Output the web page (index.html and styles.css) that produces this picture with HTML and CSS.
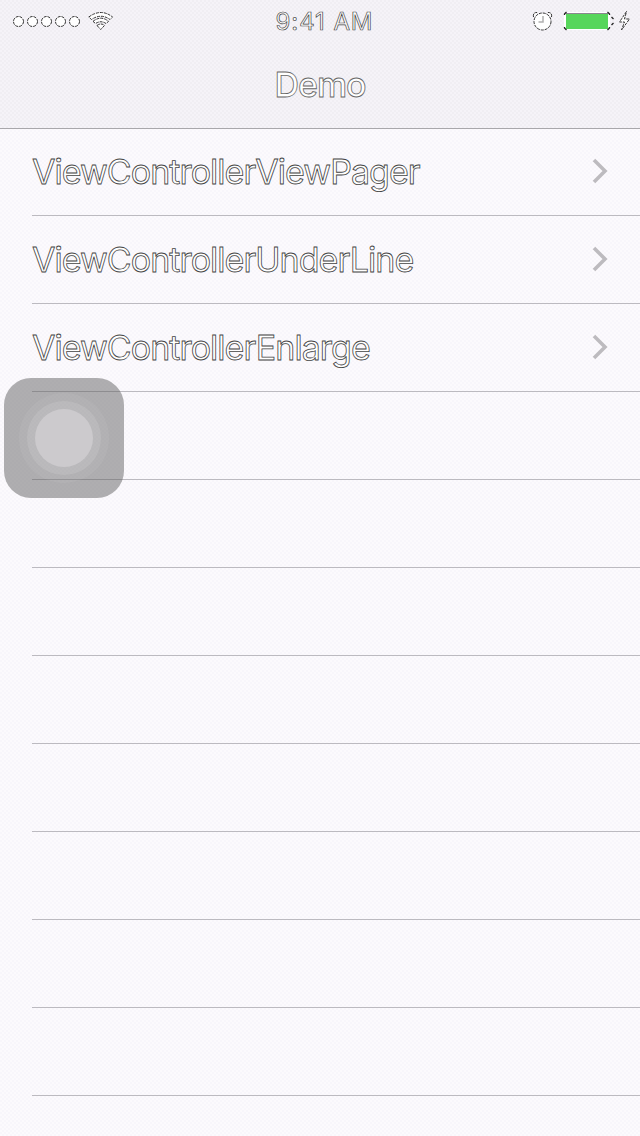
FILE: index.html
```
<!DOCTYPE html>
<html lang="en">
<head>
<meta charset="utf-8">
<title>Demo</title>
<link rel="stylesheet" href="styles.css">
</head>
<body>
<header class="header">
  <div class="status">
    <div class="signal">
      <svg class="dots" width="70" height="14" viewBox="0 0 70 14"><g class="outline dashed"><circle cx="6.5" cy="7.500" r="5"/><circle cx="20.5" cy="7.500" r="5"/><circle cx="34.5" cy="7.500" r="5"/><circle cx="48.5" cy="7.500" r="5"/><circle cx="62.5" cy="7.500" r="5"/></g></svg>
      <svg class="wifi" width="26" height="20" viewBox="0 0 26 20"><g class="outline dashed"><path d="M.8 6Q13-3 24.500 6L22 8.500Q13 2 3.500 8.500Z"/><path d="M5 10.400Q13 4 20.500 10.400L18 12.500Q13 9 7.500 12.500Z"/><path d="M9 14.500Q13 11.500 16.500 14.500L12.700 18.500Z"/></g></svg>
    </div>
    <div class="time"><span>9:41 AM</span></div>
    <div class="power">
      <svg width="108" height="24" viewBox="0 0 108 24">
        <g class="outline dashed"><circle cx="12.500" cy="12.500" r="8.500"/><path d="M3.500 8Q2.500 3 8 3.500M21.500 8Q22.500 3 17 3.500"/></g>
        <path class="hands" d="M13 7v6H8.500"/>
        <rect class="case" x="34.500" y="3.500" width="45" height="17" rx="2.500"/>
        <rect class="charge" x="36" y="5" width="42" height="15"/>
        <path class="top" d="M36 4.500h42"/>
        <path class="corners" d="M34.500 6V5l2-2M77.500 3l2 2v1M34.500 18v1l2 2M77.500 21l2-2v-1M81.500 8l2 2M81.500 16l2-2"/>
        <path class="outline dashed" d="M96.500 2.500L89.500 13h5l-3 8L99.500 10h-5Z"/>
      </svg>
    </div>
  </div>
  <h1 class="title"><span>Demo</span></h1>
</header>
<main class="list">
  <div class="row"><span class="label">ViewControllerViewPager</span><svg class="chevron" width="18" height="28" viewBox="0 0 18 28"><path d="M3 3l11 11L3 25"/></svg></div>
  <div class="row"><span class="label">ViewControllerUnderLine</span><svg class="chevron" width="18" height="28" viewBox="0 0 18 28"><path d="M3 3l11 11L3 25"/></svg></div>
  <div class="row"><span class="label">ViewControllerEnlarge</span><svg class="chevron" width="18" height="28" viewBox="0 0 18 28"><path d="M3 3l11 11L3 25"/></svg></div>
  <div class="row"></div><div class="row"></div><div class="row"></div><div class="row"></div>
  <div class="row"></div><div class="row"></div><div class="row"></div><div class="row"></div>
</main>
<div class="assist"><div class="ring outer"><div class="ring middle"><div class="ring inner"></div></div></div></div>
</body>
</html>
```
FILE: styles.css
```
* { box-sizing: border-box; }
body { margin: 0; width: 640px; height: 1136px; overflow: hidden; position: relative; font-family: Inter, "Liberation Sans", sans-serif; color: #fff; background: repeating-conic-gradient(#fcfafd 0 25%, #f8f6fb 0 50%) 0 0 / 4px 4px; }
svg { display: block; flex: none; }
.header { height: 129px; border-bottom: 1px solid #a8a7ab; background: repeating-conic-gradient(#f5f3f8 0 25%, #f0eef3 0 50%) 0 0 / 4px 4px; }
.status { height: 40px; display: grid; grid-template-columns: 1fr 1fr 1fr; align-items: center; }
.signal { display: flex; align-items: center; padding-left: 12px; gap: 6px; }
.time { text-align: center; font-size: 24px; line-height: 40px; padding: 2px 0 0 9px; letter-spacing: .9px; white-space: nowrap; -webkit-text-stroke: .7px #444; }
.power { display: flex; justify-content: flex-end; padding-right: 2px; }
.outline { fill: #fff; stroke: #333; stroke-width: 1; }
.dashed { stroke-dasharray: 3 1; }
.hands { fill: none; stroke: #b0b0b0; stroke-width: 1.5; }
.case { fill: #fff; stroke: #fff; }
.charge { fill: #57d65b; }
.top { stroke: #8b8790; }
.corners { fill: none; stroke: #222; stroke-width: 1.3; }
.title { margin: 0; height: 88px; line-height: 90px; text-align: center; font-size: 34px; font-weight: 500; letter-spacing: -1px; -webkit-text-stroke: .8px #666; }
.list { display: flex; flex-direction: column; }
.row { height: 88px; flex: none; margin-left: 32px; padding-right: 31px; border-bottom: 1px solid #bcbac0; display: flex; align-items: center; justify-content: space-between; }
.row:first-child { height: 87px; }
.label { font-size: 34px; line-height: 44px; letter-spacing: -.97px; white-space: nowrap; -webkit-text-stroke: .8px #444; }
.chevron { margin-bottom: 2px; fill: none; stroke: #bdbbbf; stroke-width: 3.600; }
.assist { position: absolute; left: 4px; top: 378px; width: 120px; height: 120px; border-radius: 27px; background: rgba(92, 91, 93, .48); display: grid; place-items: center; }
.ring { border-radius: 50%; display: grid; place-items: center; }
.outer { width: 90px; height: 90px; background: rgba(255, 255, 255, .06); }
.middle { width: 74px; height: 74px; background: rgba(255, 255, 255, .11); }
.inner { width: 58px; height: 58px; background: #cccacd; }
```
